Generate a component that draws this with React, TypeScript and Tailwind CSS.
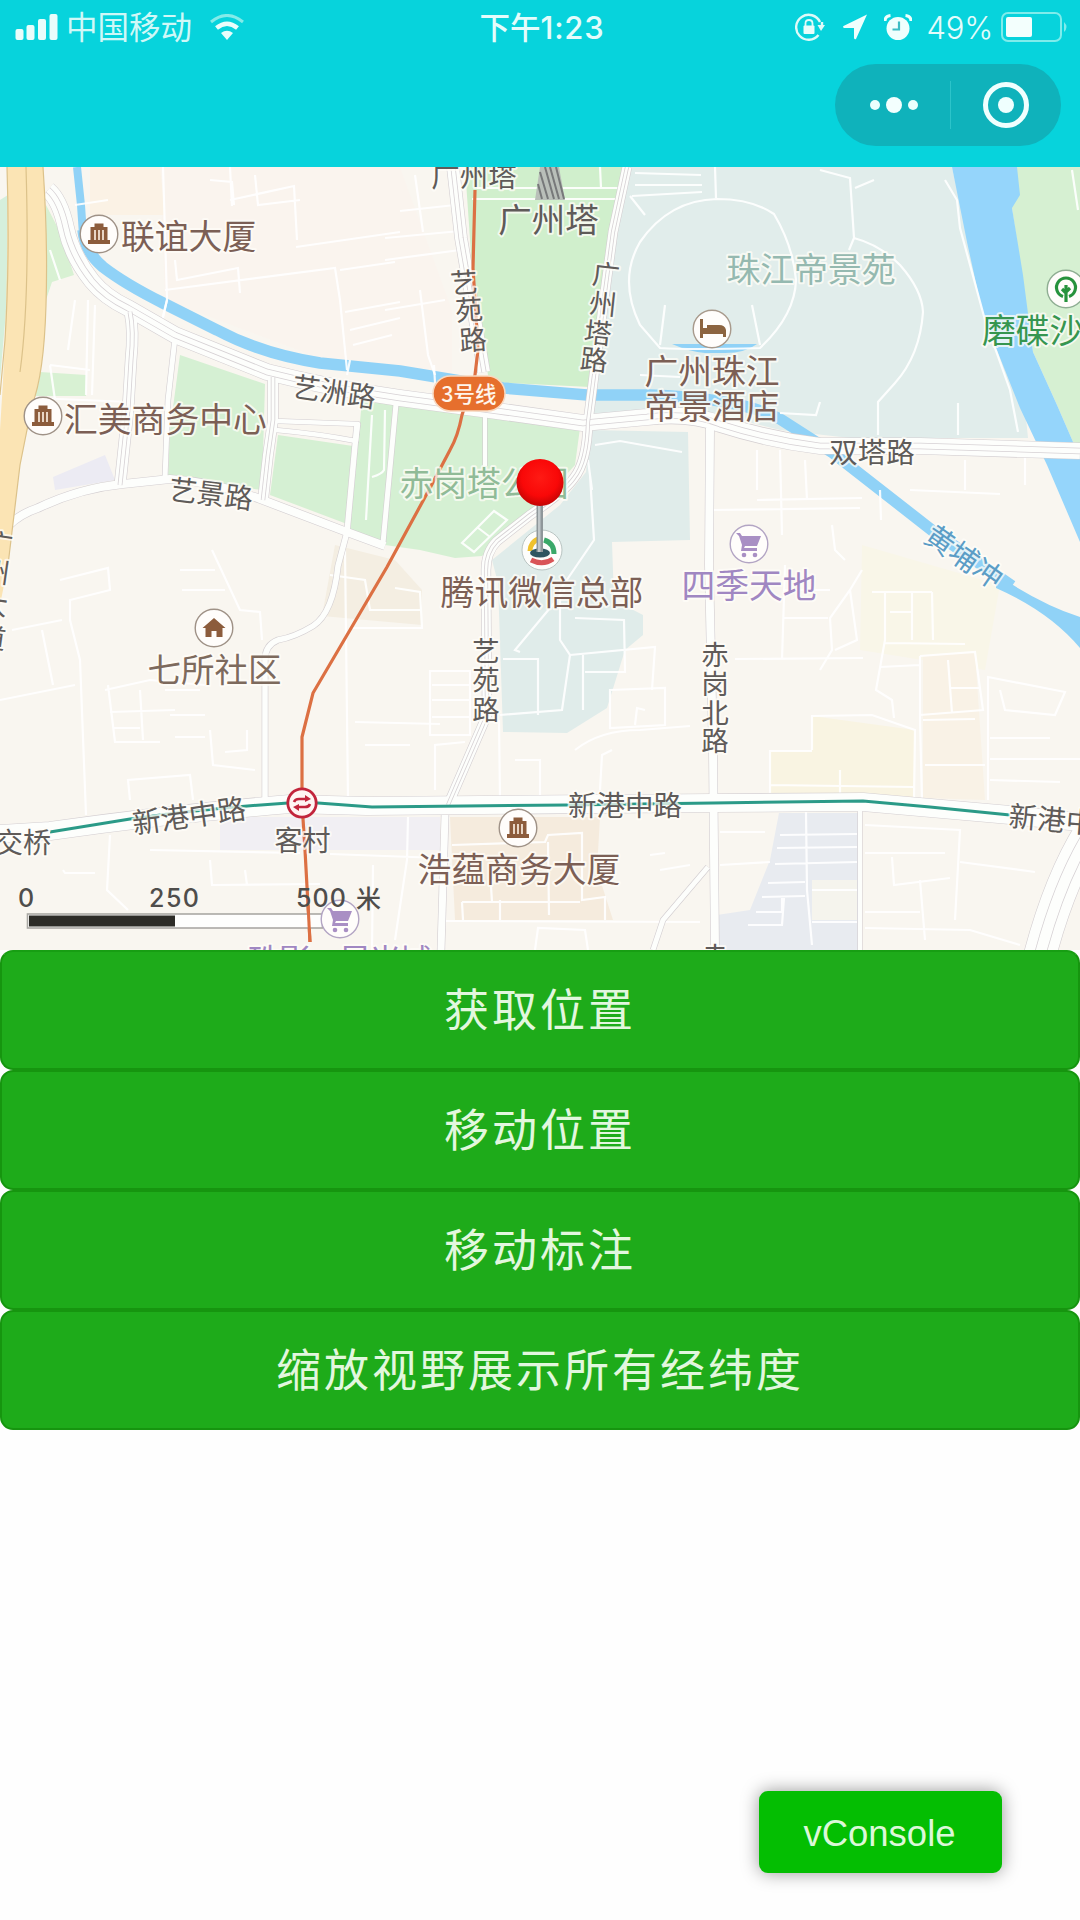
import type { ReactNode } from 'react';
import clsx from 'clsx';

type Road = { d: string; width: number; divided?: boolean };

type Label = {
  text: string;
  x: number;
  y: number;
  size: number;
  color: string;
  rotate?: number;
  anchor?: 'start' | 'middle' | 'end';
  length?: number;
};

const ROAD_GREY = '#5f5b59';
const POI_BROWN = '#7c5f55';
const POI_PURPLE = '#a087c2';

// Wide roads, drawn as a grey casing with a white fill
const ROADS: Road[] = [
  { d: 'M48 190 Q60 200 66 228 T92 281 Q105 297 128 308 L175 335 L267 372 Q330 388 400 398 L497 411 L583 423 L647 417 Q690 412 720 424 Q770 440 820 446 L920 446 L1080 451', width: 16, divided: true },
  { d: 'M130 312 Q134 330 131 360 L128 410 L120 485', width: 11, divided: true },
  { d: 'M175 338 L168 400 L165 478', width: 5 },
  { d: 'M273 377 L273 420 L268 455 L263 500', width: 10, divided: true },
  { d: 'M8 526 Q20 514 38 508 Q80 488 123 484 L170 479 Q215 482 260 499 L347 532 L385 546', width: 8 },
  { d: 'M276 421 L358 424 L356 441 Q320 434 276 430', width: 4.5 },
  { d: 'M357 424 L347 532 L338 566 Q333 613 313 626 Q295 637 278 640 Q265 645 265 660 L265 798', width: 5.5 },
  { d: 'M396 404 L383 543', width: 5 },
  { d: 'M453 167 L461 238 L484 372', width: 12, divided: true },
  { d: 'M485 410 L485 466', width: 4 },
  { d: 'M627 167 L613 232 L597 352 L588 422 Q587 462 574 478 Q565 491 530 515 L497 541 Q486 552 486 570 L487 715 L448 805', width: 9, divided: true },
  { d: 'M445 815 L441 950', width: 7 },
  { d: 'M710 428 L709 565 L713 750 L715 950', width: 8 },
  { d: 'M708 867 L663 920 L653 950', width: 5 },
  { d: 'M860 808 L860 950', width: 4 },
  { d: 'M1090 832 Q1060 880 1040 955', width: 32, divided: true },
  { d: 'M0 834 L50 831 Q170 814 290 804 L367 806 L713 803 L863 802 L1010 815 L1080 822', width: 18 },
];

// Service lanes and compound paths, plain white
const LANES = [
  'M163 167 L167 300 L162 320 M210 180 L232 182 L234 205 M230 200 L294 186 L297 240 M230 167 L232 206 M255 175 L258 205 L300 200 M175 260 L177 280 L238 268 L240 293 M165 290 L335 268 L340 300 L347 370 M296 247 L400 232 M340 270 L395 262 M345 312 L400 302 M350 330 L400 318 M353 345 L392 335',
  'M95 305 L92 395 M75 300 L68 350 M50 365 L90 370 M50 250 L60 280 M50 365 L55 400 M35 398 L130 402 M88 300 L86 395 M75 205 L108 200 M400 211 L455 205 M385 238 L460 231 M385 260 L460 250 M415 175 L423 232 M385 310 L445 300 M420 290 L428 355 L435 375',
  'M162 322 L167 300 M347 375 L350 360 M435 383 L434 365 M372 415 L366 520 M385 410 L384 470 Q382 474 372 477',
  'M477 188 L622 188 M472 199 L622 199 M600 167 L601 188 M635 173 L701 175 M635 185 L702 185 M632 196 L702 192 M630 196 L645 215',
  'M717 199 Q669 200 640 242 Q618 280 640 325 L660 348 Q690 350 760 348 Q795 315 796 280 Q793 246 774 214 Q752 199 717 199 M715 167 L716 198 M665 305 L660 345 M752 305 L760 345 M640 375 L680 377',
  'M820 170 L850 178 L854 238 L849 250 M854 238 Q880 245 900 265 Q922 290 923 312 Q920 355 895 383 L878 402 L878 435 M855 188 L874 180 M945 180 L957 200 L960 228 L985 320 L1010 390 L1018 432 M780 413 L816 415 L820 402 M958 403 L958 435 M1072 170 L1078 210',
  'M595 445 L620 441 L682 452 M588 460 L592 490 M590 475 L594 540 L560 590 L560 640 L570 655 L562 710 L500 715 M503 659 L538 659 L538 715 M575 618 L624 620 L625 672 L585 672 M570 655 L655 647 L652 690 M583 655 L583 710 M520 652 L515 650 L565 590 M462 543 L494 511 L507 520 L474 552 Z M477 527 L490 537',
  'M757 450 L757 490 M757 500 L862 498 M780 450 L782 535 M805 460 L807 500 M710 510 L860 508 M965 460 L965 490 M910 490 L1000 494 M1025 450 L1025 485 M880 490 L881 520 M832 525 L835 550 L845 560 M862 570 L850 590 L830 618 L832 650 L820 670 M850 590 L857 640 L835 650',
  'M785 565 L782 660 M735 659 L863 658 M783 618 L828 618 M783 590 L830 590 M885 592 L885 640 L876 690 L892 700 L894 718 M912 592 L912 640 M932 592 L933 640 M885 643 L965 644 M890 612 L912 612 M880 667 L920 665 M872 592 L932 592 M920 656 L920 720 L922 800 M920 656 L975 652 L983 710 L920 715 M948 660 L952 713 M950 688 L980 688',
  'M812 750 L812 716 L872 715 L915 730 L914 798 M770 795 L770 751 L812 751 M770 785 L915 787 M840 770 L840 795 M923 720 L975 719 M925 765 L985 765 M988 800 L988 677 L1065 692 L1055 715 L1005 710 L1000 690 M990 738 L1050 738 M990 759 L1080 759 M990 780 L1060 782',
  'M60 580 L108 568 L110 590 L70 600 L70 620 L80 660 L86 815 M0 700 L75 685 M12 630 L62 620 M42 630 L53 685 M105 690 L150 680 L205 685 M108 685 L115 742 L160 742 M110 712 L175 710 M113 728 L140 728 M140 690 L143 740 M180 570 L215 570 M182 590 L225 590 M212 550 L240 610 L260 612 L262 640 M165 690 L200 690 M170 715 L205 715 M175 737 L205 737 M210 730 L213 765 L255 770 M247 730 L247 750 L225 752',
  'M130 800 L128 780 L190 775 L193 800 M63 870 L65 873 L95 873 M110 835 L107 890 L128 910 M150 850 L300 853 M210 860 L212 885 L320 884 M245 870 L247 885 M373 865 L372 950 M330 854 L440 858 M408 817 L407 860 L395 940 M345 550 L348 800 M355 722 L440 724 M365 745 L410 745',
  'M330 575 L365 580 L370 610 L420 610 M350 628 L422 628 L420 592 L395 588 M430 671 L470 671 L470 735 L430 735 Z M432 685 L470 685 M432 700 L470 700 M432 717 L470 717 M435 790 L435 745 L465 742 M515 760 L540 760 L540 800 M499 720 L500 798 M610 690 L665 688 L665 725 L610 728 Z M575 750 Q600 730 640 730 L690 726 M600 790 L602 755 L612 750 M635 725 L637 708 L645 710',
  'M452 845 L545 842 L548 835 L582 833 L582 900 L605 897 L605 920 M462 902 L580 902 M462 902 L463 920 M500 900 L500 920 M548 842 L549 915 M490 870 L492 902 M445 921 L700 922 M535 950 L538 928 L585 930 L588 950 M650 855 L665 853 M660 870 L690 865',
  'M780 835 L857 834 M777 848 L857 847 M775 864 L857 862 M768 883 L805 882 M762 897 L805 896 M756 912 L782 912 L782 898 M748 925 L782 925 L784 898 M806 812 L807 890 L812 945 M812 890 L857 890 M812 922 L857 922 M865 825 L960 830 L955 920 M865 853 L945 853 M892 857 L894 885 L950 878 M865 912 L920 912 M920 880 L925 940 M960 862 L1035 872 M865 928 L970 930 L1020 945 M720 832 L765 832 M720 865 L770 862',
];

// Land cover, back to front
const AREAS: { points: string; fill: string }[] = [
  { points: '160,167 400,167 452,310 452,375 330,362 165,300', fill: '#faf4ee' },
  { points: '90,167 160,167 165,215 90,215', fill: '#fbf2e5' },
  { points: '862,545 1000,585 985,670 860,650', fill: '#f9f6e8' },
  { points: '770,751 812,751 812,716 915,730 915,798 770,798', fill: '#f9f4e2' },
  { points: '923,656 975,652 985,800 923,798', fill: '#f9f2e6' },
  { points: '335,545 395,560 422,590 422,625 322,616', fill: '#f4eee2' },
  { points: '450,817 600,817 597,870 613,920 455,920', fill: '#f5ebdd' },
  { points: '220,817 440,817 440,850 220,850', fill: '#f1eff3' },
  { points: '779,813 858,813 858,950 717,950 717,915 750,910 770,860', fill: '#e8ebf0' },
  { points: '812,880 857,880 857,920 812,920', fill: '#f5f4ed' },
  { points: '53,477 105,455 115,480 55,490', fill: '#ecebf3' },
  { points: '0,200 8,195 7,300 0,380', fill: '#d5efdc' },
  { points: '46,205 60,232 74,275 52,282 46,300', fill: '#d8f1d3' },
  { points: '40,372 86,375 86,396 35,396', fill: '#d8f1d3' },
  { points: '180,355 265,384 262,490 168,477 170,430', fill: '#d5f0d3' },
  { points: '278,435 353,446 347,524 270,495', fill: '#d5f0d3' },
  { points: '362,400 580,428 575,465 548,495 500,540 482,556 455,558 420,550 385,545 350,530', fill: '#d5f0d3' },
  { points: '465,167 627,167 610,260 590,387 489,382 472,268', fill: '#d0efcc' },
  { points: '630,167 952,167 985,315 1025,408 1028,438 850,438 780,430 700,410 592,414 605,300', fill: '#e1edeb' },
  { points: '590,430 688,432 690,540 612,542 614,600 643,615 643,635 625,650 607,708 567,733 503,732 498,583 492,560 560,505 586,472', fill: '#e0ecea' },
  { points: '1017,167 1080,167 1080,458 1057,405 1033,352 1012,208', fill: '#d6f0d2' },
];

const LABELS: Label[] = [
  { text: '联谊大厦', x: 121, y: 237, size: 33.8, color: POI_BROWN, anchor: 'start' },
  { text: '汇美商务中心', x: 64, y: 420, size: 33.8, color: POI_BROWN, anchor: 'start' },
  { text: '艺洲路', x: 334, y: 392, size: 28, color: ROAD_GREY, rotate: 8 },
  { text: '艺景路', x: 211, y: 494, size: 28, color: ROAD_GREY, rotate: 7 },
  { text: '广州塔', x: 474, y: 177, size: 28.5, color: ROAD_GREY },
  { text: '广州塔', x: 548.5, y: 220, size: 33.5, color: ROAD_GREY },
  { text: '珠江帝景苑', x: 811, y: 270, size: 33.8, color: '#95b9b0' },
  { text: '广州珠江', x: 712, y: 372, size: 33.8, color: POI_BROWN },
  { text: '帝景酒店', x: 712, y: 407, size: 33.8, color: POI_BROWN },
  { text: '磨碟沙', x: 982, y: 331, size: 33.8, color: '#369650', anchor: 'start' },
  { text: '双塔路', x: 872, y: 453, size: 28.5, color: ROAD_GREY },
  { text: '黄埔冲', x: 964, y: 557, size: 29, color: '#5b9dc6', rotate: 35 },
  { text: '赤岗塔公园', x: 484, y: 484, size: 33.8, color: '#90bb97' },
  { text: '腾讯微信总部', x: 542, y: 593, size: 33.8, color: POI_BROWN },
  { text: '四季天地', x: 749, y: 586, size: 33.8, color: POI_PURPLE },
  { text: '七所社区', x: 214.5, y: 670, size: 33.5, color: '#7d6a5d' },
  { text: '新港中路', x: 189, y: 816, size: 28.5, color: ROAD_GREY, rotate: -8 },
  { text: '新港中路', x: 625, y: 806, size: 28.5, color: ROAD_GREY },
  { text: '新港中', x: 1009, y: 816, size: 28.5, color: ROAD_GREY, rotate: 5, anchor: 'start' },
  { text: '交桥', x: 51, y: 843, size: 28, color: ROAD_GREY, anchor: 'end' },
  { text: '客村', x: 302.5, y: 841, size: 28, color: ROAD_GREY },
  { text: '浩蕴商务大厦', x: 519, y: 870, size: 33.8, color: POI_BROWN },
  { text: '珠影·星光城', x: 340, y: 961, size: 33, color: POI_PURPLE, length: 184 },
];

// Road names set one character at a time along a vertical road
const VERTICAL_LABELS: { chars: string; points: [number, number][]; rotate: number }[] = [
  { chars: '艺苑路', points: [[464, 283], [469, 310], [473, 340]], rotate: -4 },
  { chars: '广州塔路', points: [[606, 275], [603, 304], [598, 333], [594, 360]], rotate: 6 },
  { chars: '艺苑路', points: [[486, 651], [486, 680], [486, 710]], rotate: 0 },
  { chars: '赤岗北路', points: [[715, 655], [715, 684], [715, 713], [715, 741]], rotate: 0 },
  { chars: '赤', points: [[715, 957]], rotate: 0 },
  { chars: '广州大道', points: [[-1, 544], [-4, 572], [-6, 604], [-8, 638]], rotate: 8 },
];

const ACTIONS = ['获取位置', '移动位置', '移动标注', '缩放视野展示所有经纬度'];

function MapLabel({ text, x, y, size, color, rotate = 0, anchor = 'middle', length }: Label) {
  return (
    <text
      x={x}
      y={y + size * 0.36}
      fontSize={size}
      fill={color}
      textAnchor={anchor}
      textLength={length}
      transform={`rotate(${rotate} ${x} ${y})`}
      stroke="#fffdf8"
      strokeOpacity={0.75}
      strokeWidth={4}
      strokeLinejoin="round"
      paintOrder="stroke"
    >
      {text}
    </text>
  );
}

function Poi({ x, y, color, children }: { x: number; y: number; color: string; children: ReactNode }) {
  return (
    <g transform={`translate(${x} ${y})`}>
      <circle r={18.8} fill="#fffdfb" stroke={color} strokeWidth={1.4} />
      {children}
    </g>
  );
}

function BuildingGlyph() {
  return (
    <g fill="#8c5c3c">
      <path d="M-8.500 6 V-7 H-4.500 V-10.500 H4.500 V-7 H8.500 V6 H11 V10 H-11 V6 Z" />
      <path d="M-4 -4 V6 M0 -4 V6 M4 -4 V6" stroke="#fff4e8" strokeWidth={1.6} />
    </g>
  );
}

function CartGlyph() {
  return (
    <g fill="#a98fc4">
      <path d="M-13 -11 H-9 L-7 -8 H12 L8 2 H-4 L-5 4 H8 V7 H-8 L-7 1 L-10 -8 Z" />
      <circle cx={-5} cy={11} r={2.3} />
      <circle cx={6} cy={11} r={2.3} />
    </g>
  );
}

function MapView() {
  return (
    <svg className="block h-[783px] w-full shrink-0" viewBox="0 167 1080 783">
      <defs>
        <radialGradient id="pin" cx="0.5" cy="0.4" r="0.6">
          <stop offset="0" stopColor="#ff1a14" />
          <stop offset="0.65" stopColor="#f90808" />
          <stop offset="1" stopColor="#c40404" />
        </radialGradient>
      </defs>
      <rect y={167} width={1080} height={783} fill="#f9f6f0" />
      {AREAS.map((area) => (
        <polygon key={area.points} points={area.points} fill={area.fill} />
      ))}

      {/* Water */}
      <g fill="none" stroke="#90d2f7">
        <path d="M77 167 L81 205 L83 235" strokeWidth={8} />
        <path d="M83 230 Q85 252 103 267 Q125 284 163 303 L217 330 Q262 354 320 363 L400 371 L503 388 L587 395 L650 395 Q740 398 780 419 L833 453 L933 531 L1012 586" strokeWidth={11.5} />
        <path d="M672 344 L757 344 Q745 353 725 353 H705 Q690 352 672 344 Z" fill="#90d2f7" stroke="none" />
      </g>
      <path d="M996 574 Q1040 604 1080 617 V648 Q1050 612 996 588 Z" fill="#90d2f7" />
      <path d="M952 167 H1017 L1020 195 L1012 208 L1023 275 L1033 352 L1057 405 L1080 458 V542 L1047 465 L1020 408 L983 315 L967 242 Z" fill="#95d5fb" />

      {/* Streets */}
      <g fill="none" stroke="#ffffff" strokeOpacity={0.9} strokeWidth={2.2}>
        {LANES.map((d) => (
          <path key={d} d={d} />
        ))}
      </g>
      <g fill="none" strokeLinejoin="round">
        {ROADS.map((road) => (
          <path key={road.d} d={road.d} stroke="#d3ced1" strokeWidth={road.width + 1.2} />
        ))}
        {ROADS.map((road) => (
          <path key={road.d} d={road.d} stroke="#fdfefc" strokeWidth={road.width} />
        ))}
        {/* Carriageway separators */}
        {ROADS.filter((road) => road.divided).map((road) => (
          <g key={road.d}>
            <path d={road.d} stroke="#d6d1d4" strokeWidth={road.width * 0.35 + 1} />
            <path d={road.d} stroke="#fdfefc" strokeWidth={road.width * 0.35 - 0.6} />
          </g>
        ))}
      </g>

      {/* Expressway */}
      <path d="M7 167 H43 Q48 240 46 305 Q44 375 32 405 L20 465 L8 565 L0 605 V430 Q9 300 7 167 Z" fill="#fbe4b4" />
      <g fill="none" stroke="#dcc28a" strokeWidth={1.2}>
        <path d="M43 167 Q48 240 46 305 Q44 375 32 405 L20 465 L8 565" />
        <path d="M7 167 Q10 260 5 340 L0 395 M26 167 Q30 300 20 372" />
      </g>

      {/* Metro lines */}
      <path d="M475 190 L473 268 L478 350 L475 375 L462 415 Q458 436 450 450 L430 488 L387 567 L313 693 L302 737 V803 L305 850 L310 942" fill="none" stroke="#dc7043" strokeWidth={3.2} />
      <path d="M50 832 L130 819 Q210 808 288 803 L318 803 L372 807 L567 805 L713 803 L863 801 L930 807 L1010 815" fill="none" stroke="#2b9a87" strokeWidth={3} />

      {/* Canton Tower */}
      <path d="M540 167 H559 L565 200 H535 Z" fill="#b9bfb9" />
      <path d="M540 172 L548 199 M545 167 L554 199 M550 167 L559 199 M556 167 L564 199 M538 184 L542 199" stroke="#77797a" strokeWidth={2} />

      {LABELS.map((label) => (
        <MapLabel key={`${label.text}-${label.x}-${label.y}`} {...label} />
      ))}
      {VERTICAL_LABELS.map(({ chars, points, rotate }) =>
        points.map(([x, y], i) => (
          <MapLabel key={`${x}-${y}`} text={chars[i]} x={x} y={y} size={27.5} color={ROAD_GREY} rotate={rotate} />
        ))
      )}

      <rect x={433} y={376} width={72} height={35} rx={17.5} fill="#e66f2d" stroke="#f8d9c0" strokeWidth={1.5} />
      <text x={469} y={402} fontSize={21.5} fontWeight={500} fill="#fff6ec" textAnchor="middle">
        3号线
      </text>

      {/* Points of interest */}
      <Poi x={99} y={234} color="#9f9287"><BuildingGlyph /></Poi>
      <Poi x={43} y={416} color="#9f9287"><BuildingGlyph /></Poi>
      <Poi x={518} y={828} color="#9f9287"><BuildingGlyph /></Poi>
      <Poi x={749} y={544} color="#b3a5c4"><CartGlyph /></Poi>
      <Poi x={214} y={628} color="#9f9287">
        <path d="M0 -10 L11.5 0 H8.5 V9 H2.5 V3 H-2.5 V9 H-8.5 V0 H-11.5 Z" fill="#8c5c3c" />
      </Poi>
      <Poi x={712} y={329} color="#a89a8c">
        <path d="M-12 -10 H-9 V-1 H-5 V-4 H7 Q13 -4 14 1 V8 H11 V5 H-9 V9 H-12 Z" fill="#8c6440" />
      </Poi>
      <Poi x={1066} y={289} color="#8fae93">
        <path d="M0 13 V-4 M0 4 L-4 0 M0 3 L4 -1 M-3 7.5 A9.5 9.5 0 1 1 3 7.5" fill="none" stroke="#26923c" strokeWidth={3.2} />
      </Poi>

      {/* WeChat HQ */}
      <circle cx={542} cy={550} r={20} fill="#fdfdfb" stroke="#b9c4c2" strokeWidth={1} />
      <g fill="none" strokeWidth={5}>
        <path d="M530 551 A12 12 0 0 1 539 539" stroke="#f0c22c" />
        <path d="M544 540 Q554 543 554 554" stroke="#3aa868" />
        <path d="M531 560 Q543 566 553 559" stroke="#d95457" />
      </g>
      <ellipse cx={540} cy={553} rx={10} ry={4.5} fill="#2f5560" />

      {/* Marker pin */}
      <rect x={536.5} y={503} width={6.5} height={49} fill="#8f979a" />
      <rect x={538} y={503} width={2.5} height={49} fill="#c0c7c9" />
      <circle cx={540} cy={482.5} r={23.5} fill="url(#pin)" />

      {/* Interchange */}
      <g transform="translate(302 803)" fill="none" stroke="#c2253c">
        <circle r={14.2} fill="#fff5f3" strokeWidth={2.8} />
        <path d="M-8 -1 Q-7 -4 -3 -4 H4 M8 1 Q7 4 3 4 H-4" strokeWidth={2.6} />
        <path d="M3 -8 L9 -4 L3 -1 Z M-3 8 L-9 4 L-3 1 Z" fill="#c2253c" stroke="none" />
      </g>

      {/* Scale */}
      <rect x={27.5} y={914} width={295} height={14} fill="#ffffff" fillOpacity={0.85} stroke="#aaa8a4" strokeWidth={1.6} />
      <rect x={29} y={915.5} width={146} height={11} fill="#2d2c27" />
      <path d="M308 905 L310 942" stroke="#dc7043" strokeWidth={3} />
      <Poi x={340} y={919} color="#b3a5c4"><CartGlyph /></Poi>
      <g fill="#4f4d4b" fontSize={25} fontWeight={500} className="font-[Inter,'Noto_Sans_CJK_SC',sans-serif]">
        <text x={18} y={907}>0</text>
        <text x={149} y={907} textLength={50}>250</text>
        <text x={296} y={907} textLength={50}>500</text>
        <text x={356} y={908}>米</text>
      </g>
    </svg>
  );
}

function StatusBar() {
  return (
    <div className="grid h-[54px] grid-cols-3 items-center pr-[11px] pl-[15px] text-[#e4fcfb]">
      <div className="flex items-center">
        <svg width={43} height={26} viewBox="0 0 43 26" fill="#e9fdfb">
          <rect x={0.5} y={15} width={8} height={11} rx={2} />
          <rect x={11.5} y={11} width={8} height={15} rx={2} />
          <rect x={23} y={5} width={8} height={21} rx={2} />
          <rect x={34.5} y={0} width={8} height={26} rx={2} />
        </svg>
        <span className="ml-[8px] pb-[3px] text-[31.5px] leading-none text-[#cff8f7]">中国移动</span>
        <svg className="ml-[17px]" width={36} height={26} viewBox="0 0 36 26" fill="none">
          <path d="M2 8 Q18 -5 34 8" stroke="#83ebe9" strokeWidth={3} />
          <path d="M7.500 14 Q18 5.500 28.500 14" stroke="#e9fdfb" strokeWidth={4.500} />
          <path d="M12 19 Q18 14.500 24 19 L18 26 Z" fill="#e9fdfb" />
        </svg>
      </div>
      <div className="pb-[1px] text-center text-[30.5px] leading-none font-medium whitespace-nowrap">
        下午<span className="font-[Inter] text-[31px] tracking-[0.8px]">1:23</span>
      </div>
      <div className="flex items-center justify-end">
        <svg width={30} height={28} viewBox="0 0 30 28" fill="none" stroke="#dffaf8" strokeWidth={2.4}>
          <path d="M25 9 A12.500 12.500 0 1 0 23.500 22" />
          <path d="M27 9 V14" />
          <path d="M22.500 12 H30 L26 18 Z" fill="#dffaf8" stroke="none" />
          <rect x={8.500} y={12.500} width={11} height={8.500} rx={1} fill="#e9fdfb" stroke="none" />
          <path d="M10.500 13 V10.500 Q10.500 7 14 7 T17.500 10.500 V13" strokeWidth={1.8} />
        </svg>
        <svg className="ml-[17px]" width={26} height={26} viewBox="0 0 26 26" fill="#effffd">
          <path d="M25 0.500 L14 25 Q12.500 26 12 24 V14 H2 Q0 13 1.500 12 Z" />
        </svg>
        <svg className="ml-[16px]" width={28} height={27} viewBox="0 0 28 27">
          <circle cx={14} cy={14.500} r={11.500} fill="#effffd" />
          <path d="M1 7 Q1 2 6.500 1.500 M27 7 Q27 2 21.500 1.500" fill="none" stroke="#effffd" strokeWidth={3} />
          <path d="M15 7.500 V15.500 H8.500" fill="none" stroke="#3dbcc4" strokeWidth={2.2} />
        </svg>
        <span className="ml-[14px] font-[Inter] text-[31px] leading-none font-light tracking-[-0.2px]">49%</span>
        <svg className="ml-[8px]" width={68} height={30} viewBox="0 0 68 30">
          <rect x={1} y={1} width={59} height={28} rx={6} fill="none" stroke="#7feceb" strokeWidth={2} />
          <rect x={5} y={5} width={26} height={20} rx={2} fill="#f3fffd" />
          <path d="M63 10 Q68 15 63 20 Z" fill="#7feceb" />
        </svg>
      </div>
    </div>
  );
}

function Capsule() {
  return (
    <div className="mt-[10px] mr-[19px] ml-auto flex h-[82px] w-[226px] items-center rounded-full bg-[#0fb2bb]">
      <div className="flex flex-1 items-center justify-center gap-[6px] pl-[4px]">
        <span className="size-[10px] rounded-full bg-[#e9fffd]" />
        <span className="size-[16px] rounded-full bg-[#f3fffe]" />
        <span className="size-[10px] rounded-full bg-[#e9fffd]" />
      </div>
      <div className="h-[48px] w-px bg-[#2cc4ca]" />
      <div className="flex flex-1 items-center justify-center">
        <div className="flex size-[46px] items-center justify-center rounded-full border-[5px] border-[#effffe]">
          <span className="size-[16px] rounded-full bg-[#effffe]" />
        </div>
      </div>
    </div>
  );
}

export default function App() {
  return (
    <div className="relative flex h-[1920px] w-[1080px] flex-col overflow-hidden bg-[#fefefe] font-['Noto_Sans_CJK_SC',sans-serif]">
      <header className="h-[167px] shrink-0 bg-[#07d3dc]">
        <StatusBar />
        <Capsule />
      </header>

      <MapView />

      <main className="flex flex-col">
        {ACTIONS.map((action, i) => (
          <button
            key={action}
            className={clsx(
              'h-[120px] rounded-[13px] border-2 border-[#16950f] bg-[#1eab1a] pb-[6px] text-[45px] leading-none tracking-[3px] text-[#e2f7de]',
              i === 0 && 'border-t-[#179e13]'
            )}
          >
            {action}
          </button>
        ))}
      </main>

      {/* Debug console toggle */}
      <button className="absolute top-[1791px] left-[759px] h-[82px] w-[243px] rounded-[9px] bg-[#04be02] pt-[4px] pr-[2px] font-['Liberation_Sans',sans-serif] text-[36.5px] text-[#dcf8d8] shadow-[0_0_18px_rgba(0,0,0,0.4)]">
        vConsole
      </button>
    </div>
  );
}
